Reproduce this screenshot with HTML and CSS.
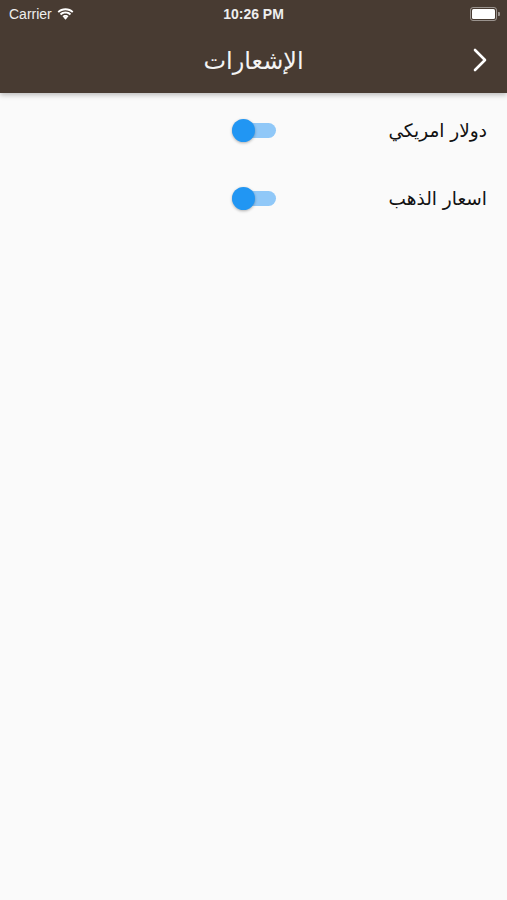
FILE: index.html
```html
<!DOCTYPE html>
<html lang="ar">
<head>
    <meta charset="UTF-8">
    <meta name="viewport" content="width=device-width, initial-scale=1.0">
    <title>الإشعارات</title>
    <link rel="stylesheet" href="styles.css">
</head>
<body>

    <header class="app-bar">
        <div class="status-bar">
            <div class="carrier">
                Carrier
                <svg class="wifi" width="17" height="12" viewBox="0 0 17 12">
                    <path d="M8.5 2.2c2.6 0 4.9 1 6.6 2.6l1.3-1.4C14.4 1.5 11.6.3 8.5.3S2.6 1.5.6 3.4l1.3 1.4C3.6 3.2 5.9 2.2 8.5 2.2z" fill="#fff"/>
                    <path d="M8.5 5.5c1.7 0 3.2.6 4.3 1.7l1.3-1.4C12.7 4.4 10.7 3.6 8.5 3.6S4.3 4.4 2.9 5.8l1.3 1.4c1.1-1.1 2.6-1.7 4.3-1.7z" fill="#fff"/>
                    <path d="M8.5 8.7c.8 0 1.5.3 2 .8L8.5 11.7 6.5 9.5c.5-.5 1.2-.8 2-.8z" fill="#fff"/>
                    <path d="M8.5 6.9c1.2 0 2.3.5 3.1 1.2l-1.3 1.4c-.5-.4-1.1-.7-1.800-.7s-1.3.3-1.8.7L5.4 8.1c.8-.7 1.9-1.2 3.1-1.2z" fill="#fff"/>
                </svg>
            </div>
            <div class="time">10:26 PM</div>
            <div class="battery">
                <span class="battery-body"><span class="battery-level"></span></span>
                <span class="battery-tip"></span>
            </div>
        </div>
        <nav class="nav-bar">
            <h1 class="title">الإشعارات</h1>
            <svg class="back" width="16" height="24" viewBox="0 0 16 24">
                <path d="M3 2l10 10L3 22" fill="none" stroke="#fff" stroke-width="2.6" stroke-linecap="round" stroke-linejoin="round"/>
            </svg>
        </nav>
    </header>

    <main class="settings">
        <div class="setting-row">
            <span class="setting-label">دولار امريكي</span>
            <span class="switch on"><span class="thumb"></span></span>
        </div>
        <div class="setting-row">
            <span class="setting-label">اسعار الذهب</span>
            <span class="switch on"><span class="thumb"></span></span>
        </div>
    </main>

</body>
</html>
```

FILE: styles.css
```css
body {
    margin: 0;
    background-color: #fafafa;
    font-family: "DejaVu Sans", "Noto Sans", sans-serif;
    height: 900px;
}

.app-bar {
    background-color: #483b32;
    color: white;
    height: 93px;
    box-shadow: 0 2px 5px rgba(0, 0, 0, 0.25);
    display: flex;
    flex-direction: column;
}

/* barra de estado */
.status-bar {
    height: 28px;
    display: flex;
    align-items: center;
    justify-content: space-between;
    padding: 0 7px 0 9px;
    font-family: "Liberation Sans", Arial, sans-serif;
    font-size: 14px;
    position: relative;
}

.carrier {
    display: flex;
    align-items: center;
    gap: 5px;
    color: #eee;
}

.time {
    position: absolute;
    left: 0;
    right: 0;
    text-align: center;
    font-weight: bold;
    color: #eee;
}

.battery {
    display: flex;
    align-items: center;
}

.battery-body {
    width: 23px;
    height: 10px;
    border: 1px solid rgba(255, 255, 255, 0.45);
    border-radius: 3px;
    padding: 1px;
    display: flex;
}

.battery-level {
    flex: 1;
    background: white;
    border-radius: 1.5px;
}

.battery-tip {
    width: 2px;
    height: 4px;
    margin-left: 1px;
    background: rgba(255, 255, 255, 0.45);
    border-radius: 0 1px 1px 0;
}

/* barra de navegación */
.nav-bar {
    flex: 1;
    display: flex;
    align-items: center;
    justify-content: center;
    position: relative;
}

.title {
    margin: 0;
    font-size: 24px;
    font-weight: normal;
    color: #f4f4f4;
}

.back {
    position: absolute;
    right: 19px;
    top: 20px;
}

/* lista de ajustes */
.settings {
    direction: rtl;
    padding-top: 3px;
}

.setting-row {
    height: 68px;
    display: grid;
    grid-template-columns: 211px auto;
    align-items: center;
    justify-content: start;
    padding-right: 20px;
}

.setting-label {
    font-size: 18.5px;
    color: #111;
}

.switch {
    width: 44px;
    height: 15px;
    border-radius: 8px;
    background-color: #90c8f8;
    position: relative;
    display: block;
}

.switch .thumb {
    position: absolute;
    top: -4px;
    left: 0;
    width: 23px;
    height: 23px;
    border-radius: 50%;
    background-color: #2196f3;
    box-shadow: 0 1px 3px rgba(0, 0, 0, 0.3);
}
```
